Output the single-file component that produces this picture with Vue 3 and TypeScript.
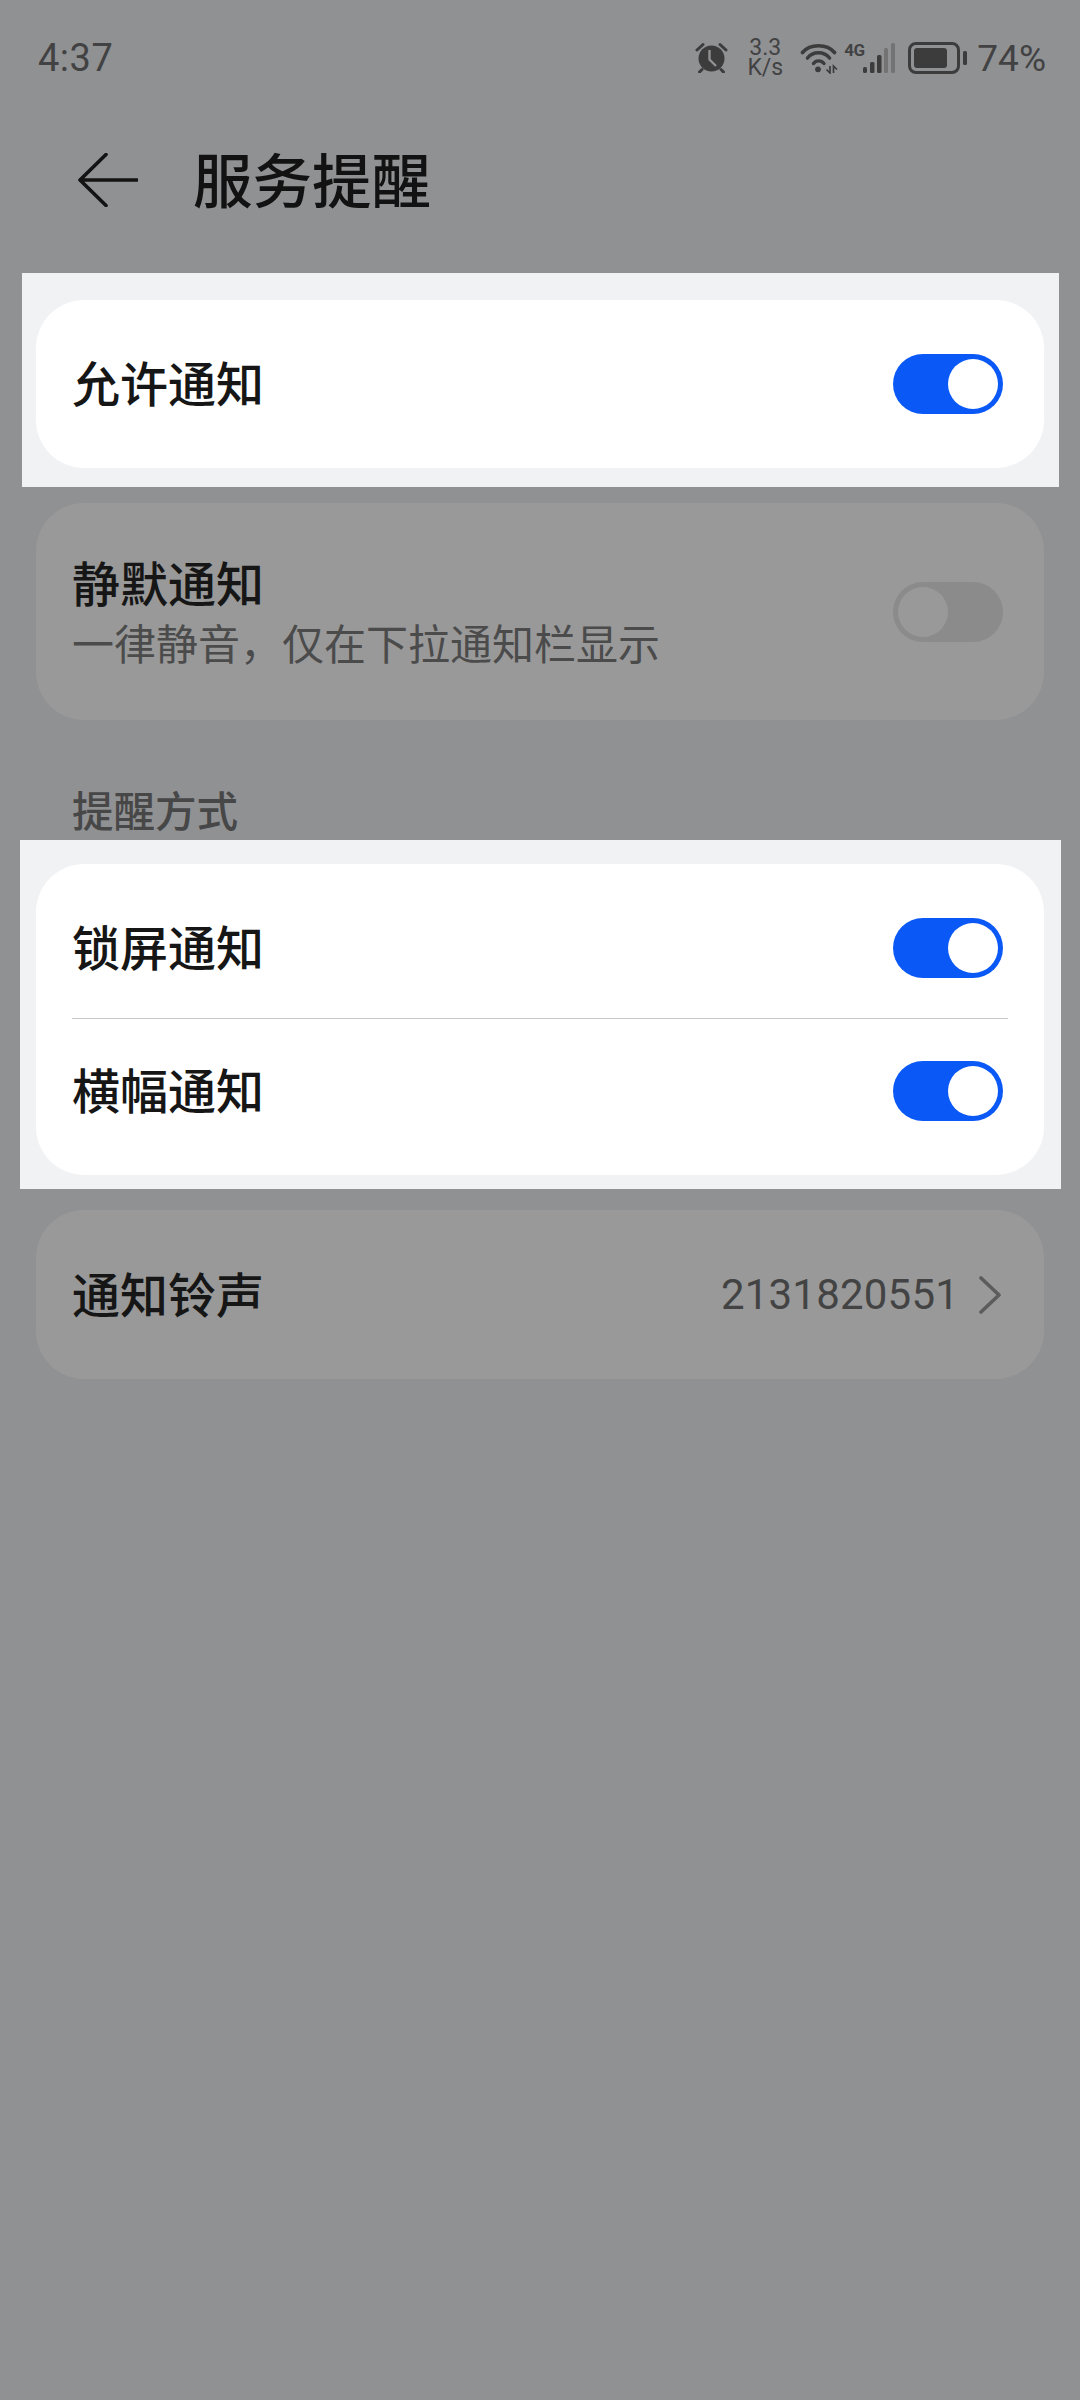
<script setup lang="ts">
interface Row {
  label: string
  on: boolean
}

const lockRows: Row[] = [
  { label: '锁屏通知', on: true },
  { label: '横幅通知', on: true },
]
</script>

<template>
  <div class="page">
    <div class="status-bar">
      <span class="time">4:37</span>
      <div class="status-icons">
        <svg class="ic-alarm" width="33" height="31" viewBox="0 0 33 31">
          <circle cx="16.5" cy="16.5" r="13" fill="#3c3c3d" />
          <path d="M2 8 8 2.5M31 8 25 2.5M7 27.5 4.5 30M26 27.5 28.5 30" stroke="#3c3c3d" stroke-width="3" stroke-linecap="round" fill="none" />
          <path d="M14.5 8v9.5l6.5 6.5" stroke="#909193" stroke-width="2.4" fill="none" />
        </svg>
        <div class="speed">
          <span>3.3</span>
          <span>K/s</span>
        </div>
        <svg class="ic-wifi" width="40" height="32" viewBox="0 0 40 32">
          <path d="M2.5 10.5C10 1.5 27 1.5 34.5 10.5" stroke="#3c3c3d" stroke-width="3.6" stroke-linecap="round" fill="none" />
          <path d="M7.5 16C13 9 24 9 29.5 16" stroke="#3c3c3d" stroke-width="3.6" stroke-linecap="round" fill="none" />
          <path d="M13.5 21.5C16 18 21 18 24 21.5" stroke="#3c3c3d" stroke-width="3.4" stroke-linecap="round" fill="none" />
          <circle cx="18" cy="27.3" r="2.9" fill="#3c3c3d" />
          <path d="M30 24v7l-3.5-3.5M33.5 31v-7l3.5 3.5" stroke="#3c3c3d" stroke-width="1.7" fill="none" />
        </svg>
        <div class="signal-wrap">
          <span class="net-type">4G</span>
          <svg width="33" height="31" viewBox="0 0 33 31">
            <rect x="0" y="24" width="4" height="6" rx="1.5" fill="#3c3c3d" />
            <rect x="7" y="19" width="4.5" height="11" rx="1.5" fill="#3c3c3d" />
            <rect x="14" y="12" width="4.5" height="18" rx="1.5" fill="#3c3c3d" />
            <rect x="21" y="5" width="4" height="25" rx="1.5" fill="#737374" />
            <rect x="28" y="0" width="4" height="30" rx="1.5" fill="#737374" />
          </svg>
        </div>
        <svg class="ic-battery" width="60" height="32" viewBox="0 0 60 32">
          <rect x="2.5" y="1.5" width="49" height="29" rx="6.5" fill="none" stroke="#3c3c3d" stroke-width="3" />
          <rect x="7" y="6" width="33" height="20" rx="3" fill="#3c3c3d" />
          <rect x="56" y="9" width="4" height="14" rx="1.5" fill="#3c3c3d" />
        </svg>
        <span class="battery">74%</span>
      </div>
    </div>

    <header class="title-bar">
      <svg class="back" width="60" height="54" viewBox="0 0 60 54">
        <path d="M59 27H2M28 1.5 2 27l26 25.5" stroke="#131313" stroke-width="3.6" stroke-linecap="round" stroke-linejoin="round" fill="none" />
      </svg>
      <h1>服务提醒</h1>
    </header>

    <div class="spot spot-top">
      <div class="card row">
        <span class="label">允许通知</span>
        <span class="toggle on"><i></i></span>
      </div>
    </div>

    <div class="card card-dim row row-silent">
      <div class="text-stack">
        <span class="label">静默通知</span>
        <span class="sub">一律静音，仅在下拉通知栏显示</span>
      </div>
      <span class="toggle off"><i></i></span>
    </div>

    <div class="section-label">提醒方式</div>

    <div class="spot spot-mid">
      <div class="card card-list">
        <template v-for="(item, idx) in lockRows" :key="item.label">
          <div v-if="idx > 0" class="divider"></div>
          <div class="row list-row">
            <span class="label">{{ item.label }}</span>
            <span class="toggle" :class="item.on ? 'on' : 'off'"><i></i></span>
          </div>
        </template>
      </div>
    </div>

    <div class="card card-dim row row-ring">
      <span class="label">通知铃声</span>
      <div class="value-wrap">
        <span class="value">2131820551</span>
        <svg width="24" height="38" viewBox="0 0 24 38">
          <path d="M3 2l18 17L3 36" stroke="#5c5c5d" stroke-width="3.6" stroke-linecap="round" stroke-linejoin="round" fill="none" />
        </svg>
      </div>
    </div>
  </div>
</template>

<style scoped>
.page {
  width: 1080px;
  height: 2400px;
  background: #909193;
  overflow: hidden;
  font-family: "Noto Sans CJK SC", "Noto Sans", sans-serif;
  color: #141414;
}

.status-bar {
  height: 116px;
  padding: 0 34px 0 38px;
  box-sizing: border-box;
  display: flex;
  justify-content: space-between;
  align-items: flex-start;
  color: #424243;
  font-family: Roboto, sans-serif;
}

.time {
  margin-top: 36px;
  font-size: 38px;
  line-height: 44px;
  letter-spacing: 0.5px;
}

.status-icons {
  display: flex;
  align-items: flex-start;
  margin-top: 40px;
}

.ic-alarm {
  margin-top: 2px;
}

.speed {
  display: flex;
  flex-direction: column;
  align-items: center;
  width: 36px;
  margin: -2px 0 0 19px;
  font-size: 23px;
  line-height: 20px;
}

.ic-wifi {
  margin: 2px -3px 0 17px;
}

.signal-wrap {
  position: relative;
  margin: 3px 0 0 26px;
}

.net-type {
  position: absolute;
  left: -19px;
  top: -1px;
  font-size: 17px;
  line-height: 16px;
  font-weight: 700;
  letter-spacing: -0.5px;
}

.ic-battery {
  margin: 2px 0 0 11px;
}

.battery {
  margin-left: 10px;
  font-size: 37px;
  line-height: 38px;
}

.title-bar {
  height: 157px;
  padding: 0 0 30px 78px;
  box-sizing: border-box;
  display: flex;
  align-items: center;
}

.title-bar h1 {
  margin: 0 0 6px 55px;
  font-size: 59.5px;
  line-height: 70px;
  font-weight: 500;
  color: #121212;
}

.spot {
  background: #f1f2f4;
  box-sizing: border-box;
}

.spot-top {
  margin: 0 21px 16px 22px;
  padding: 27px 15px 19px 14px;
}

.spot-mid {
  margin: 8px 19px 21px 20px;
  padding: 24px 17px 14px 16px;
}

.card {
  background: #fff;
  border-radius: 48px;
  box-sizing: border-box;
}

.card-dim {
  background: #999999;
  margin: 0 36px;
}

.row {
  display: flex;
  align-items: center;
  justify-content: space-between;
  padding: 0 41px 0 36px;
}

.spot .row {
  height: 168px;
}

.label {
  font-size: 48px;
  line-height: 56px;
  font-weight: 500;
  color: #161616;
}

.row > .label {
  margin-bottom: 6px;
}

.row-silent {
  height: 217px;
}

.text-stack {
  display: flex;
  flex-direction: column;
  margin-bottom: 2px;
}

.sub {
  font-size: 42px;
  line-height: 52px;
  color: #4b4b4c;
  margin-top: 7px;
}

.section-label {
  margin: 0 72px;
  padding-top: 65px;
  height: 112px;
  box-sizing: border-box;
  font-size: 41.5px;
  line-height: 48px;
  font-weight: 500;
  color: #474748;
}

.spot .card-list .list-row {
  height: 142px;
}

.divider {
  height: 1px;
  margin: -1px 36px 1px;
  background: #c9c9cb;
}

.card-list {
  padding: 13px 0;
}

.row-ring {
  height: 169px;
  padding-right: 42px;
}

.value-wrap {
  display: flex;
  align-items: center;
  gap: 19px;
}

.value {
  font-family: Roboto, sans-serif;
  font-size: 42px;
  line-height: 50px;
  letter-spacing: 0.2px;
  color: #434344;
}

.toggle {
  width: 110px;
  height: 60px;
  border-radius: 30px;
  padding: 5px;
  box-sizing: border-box;
  display: flex;
}

.toggle i {
  display: block;
  width: 50px;
  height: 50px;
  border-radius: 50%;
}

.toggle.on {
  background: #0a59f7;
  justify-content: flex-end;
}

.toggle.on i {
  background: #fff;
}

.toggle.off {
  background: #8b8b8b;
}

.toggle.off i {
  background: #999999;
}
</style>
